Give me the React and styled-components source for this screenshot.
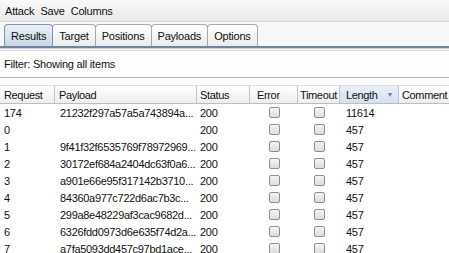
import React from "react"
import styled, { createGlobalStyle } from "styled-components"

const rows = [
  ["174", "21232f297a57a5a743894a...", "200", "11614"],
  ["0", "", "200", "457"],
  ["1", "9f41f32f6535769f78972969...", "200", "457"],
  ["2", "30172ef684a2404dc63f0a6...", "200", "457"],
  ["3", "a901e66e95f317142b3710...", "200", "457"],
  ["4", "84360a977c722d6ac7b3c...", "200", "457"],
  ["5", "299a8e48229af3cac9682d...", "200", "457"],
  ["6", "6326fdd0973d6e635f74d2a...", "200", "457"],
  ["7", "a7fa5093dd457c97bd1ace...", "200", "457"],
]

const tabs = ["Results", "Target", "Positions", "Payloads", "Options"]

const cols = "55px 142px 53px 48px 42px 59px 1fr"

const App = () => {
  return (
    <Page>
      <Global />
      <MenuBar>
        <span>Attack</span>
        <span>Save</span>
        <span>Columns</span>
      </MenuBar>
      <TabStrip>
        {tabs.map((t, i) => (
          <Tab key={t} $active={i === 0}>
            {t}
          </Tab>
        ))}
      </TabStrip>
      <FilterBar>Filter: Showing all items</FilterBar>
      <Table>
        <HeadRow>
          <HeadCell>Request</HeadCell>
          <HeadCell>Payload</HeadCell>
          <HeadCell $pad={3}>Status</HeadCell>
          <HeadCell $pad={7}>Error</HeadCell>
          <HeadCell $pad={2}>Timeout</HeadCell>
          <HeadCell $sorted $pad={6}>
            Length
            <SortArrow>▼</SortArrow>
          </HeadCell>
          <HeadCell $last $pad={3}>Comment</HeadCell>
        </HeadRow>
        {rows.map((r) => (
          <Row key={r[0]}>
            <Cell>{r[0]}</Cell>
            <Cell $pad={5}>{r[1]}</Cell>
            <Cell $pad={3}>{r[2]}</Cell>
            <CheckCell>
              <Check />
            </CheckCell>
            <CheckCell>
              <Check />
            </CheckCell>
            <Cell $pad={6}>{r[3]}</Cell>
            <Cell />
          </Row>
        ))}
      </Table>
    </Page>
  )
}

export default App

const Global = createGlobalStyle`
  html, body {
    margin: 0;
    padding: 0;
    background: #fff;
  }
  body {
    font-family: "Liberation Sans", Arial, sans-serif;
    font-size: 11px;
    letter-spacing: -0.2px;
    color: #111;
    overflow: hidden;
  }
`

const Page = styled.div`
  width: 449px;
  height: 253px;
  background: #fcfcfc;
  overflow: hidden;
`

const MenuBar = styled.div`
  height: 22px;
  display: flex;
  align-items: center;
  gap: 6px;
  padding-left: 5px;
  background: linear-gradient(#fafafa, #e9e9e9);
  border-bottom: 1px solid #d6d6d6;
  box-sizing: border-box;
`

const TabStrip = styled.div`
  display: flex;
  align-items: flex-end;
  height: 26px;
  padding-left: 4px;
  box-sizing: border-box;
  background: #f8f8f8;
  border-bottom: 2px solid #6f86a0;
  box-shadow: 0 1px 0 #c9d3de;
`

const Tab = styled.div`
  height: 22px;
  display: flex;
  align-items: center;
  padding: 0 6px;
  margin-right: -1px;
  box-sizing: border-box;
  border: 1px solid ${(p) => (p.$active ? "#7f93aa" : "#a5a9ae")};
  border-bottom: none;
  border-radius: 4px 4px 0 0;
  background: ${(p) =>
    p.$active
      ? "linear-gradient(#eaf1f8, #c7d7e7)"
      : "linear-gradient(#ffffff, #ececec)"};
  position: relative;
  z-index: ${(p) => (p.$active ? 1 : 0)};
`

const FilterBar = styled.div`
  margin-top: 2px;
  height: 28px;
  display: flex;
  align-items: center;
  padding-left: 4px;
  box-sizing: border-box;
  background: #fdfdfd;
  border-top: 1px solid #d4d4d4;
  border-bottom: 1px solid #b9b9b9;
`

const Table = styled.div`
  margin-top: 7px;
  background: #fff;
`

const HeadRow = styled.div`
  display: grid;
  grid-template-columns: ${cols};
  height: 17px;
  background: linear-gradient(#ffffff, #eeeeee);
  border-top: 1px solid #dcdcdc;
  border-bottom: 1px solid #bdbdbd;
  letter-spacing: -0.35px;
`

const HeadCell = styled.div`
  display: flex;
  align-items: center;
  padding-left: ${(p) => p.$pad ?? 4}px;
  box-sizing: border-box;
  white-space: nowrap;
  overflow: hidden;
  border-right: ${(p) => (p.$last ? "none" : "1px solid #c3c3c3")};
  background: ${(p) =>
    p.$sorted ? "linear-gradient(#e9f0f8, #d3e1ef)" : "transparent"};
`

const SortArrow = styled.span`
  margin-left: auto;
  margin-right: 5px;
  font-size: 7px;
  color: #6a85a6;
`

const Row = styled.div`
  display: grid;
  grid-template-columns: ${cols};
  height: 17px;
  align-items: center;
  letter-spacing: -0.3px;
`

const Cell = styled.div`
  padding-left: ${(p) => p.$pad ?? 4}px;
  white-space: nowrap;
  overflow: hidden;
`

const CheckCell = styled.div`
  display: flex;
  justify-content: center;
  align-items: center;
`

const Check = styled.span`
  width: 11px;
  height: 11px;
  box-sizing: border-box;
  border: 1px solid #8e8f8f;
  border-radius: 2px;
  background: linear-gradient(#f4f4f4, #dcdcdc);
`
